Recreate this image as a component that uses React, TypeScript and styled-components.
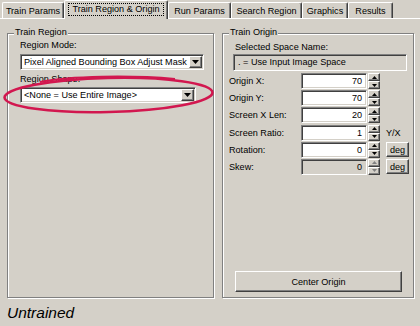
import React from 'react'
import styled, { createGlobalStyle } from 'styled-components'

const GlobalStyle = createGlobalStyle`
  html, body {
    margin: 0;
    padding: 0;
    background: #d4d0c8;
  }
  body {
    font-family: "Liberation Sans", Arial, sans-serif;
  }
`

const Window = styled.div`
  position: relative;
  width: 420px;
  height: 326px;
  overflow: hidden;
  background: #d4d0c8;
  color: #000;
  font-family: "Liberation Sans", Arial, sans-serif;
  font-size: 9.1px;
`

const TabStrip = styled.div`
  display: flex;
  align-items: flex-end;
  height: 18px;
  padding-left: 2px;
`

const Tab = styled.div<{ $w: number; $active?: boolean }>`
  box-sizing: border-box;
  position: relative;
  z-index: ${p => (p.$active ? 2 : 1)};
  width: ${p => p.$w}px;
  height: ${p => (p.$active ? 19 : 16)}px;
  margin-bottom: ${p => (p.$active ? -1 : 0)}px;
  padding-bottom: ${p => (p.$active ? 2 : 0)}px;
  display: flex;
  align-items: center;
  justify-content: center;
  white-space: nowrap;
  background: #d4d0c8;
  border-top: 1px solid #fff;
  border-left: 1px solid #fff;
  border-right: 1px solid #404040;
  border-radius: 2px 2px 0 0;
  box-shadow: inset -1px 0 0 #808080;
`

const FocusText = styled.span`
  padding: 1px 4px 2px;
  outline: 1px dotted #000;
  outline-offset: -1px;
`

const Page = styled.div`
  display: flex;
  gap: 8px;
  padding: 14px 0 0 7px;
  border-top: 1px solid #fff;
`

const Group = styled.div<{ $w: number }>`
  box-sizing: border-box;
  width: ${p => p.$w}px;
  height: 265px;
  display: flex;
  flex-direction: column;
  border: 1px solid #808080;
  box-shadow: inset 1px 1px 0 #fff, 1px 1px 0 #fff;
`

const Caption = styled.span`
  align-self: flex-start;
  margin: -7px 0 0 6px;
  padding: 0 1px;
  line-height: 11px;
  background: #d4d0c8;
  white-space: nowrap;
`

const GroupBody = styled.div<{ $pl: number }>`
  flex: 1;
  display: flex;
  flex-direction: column;
  padding: 0 0 5px ${p => p.$pl}px;
`

const Label = styled.div<{ $mt?: number; $mb?: number; $ml?: number }>`
  line-height: 12px;
  margin: ${p => p.$mt ?? 0}px 0 ${p => p.$mb ?? 0}px ${p => p.$ml ?? 0}px;
  white-space: nowrap;
`

const Sunken = styled.div<{ $bg?: string }>`
  box-sizing: border-box;
  background: ${p => p.$bg ?? '#fff'};
  border: 1px solid;
  border-color: #808080 #fff #fff #808080;
  box-shadow: inset 1px 1px 0 #404040, inset -1px -1px 0 #d4d0c8;
`

const Combo = styled(Sunken)<{ $w: number; $mt?: number }>`
  width: ${p => p.$w}px;
  height: 16px;
  margin-top: ${p => p.$mt ?? 0}px;
  display: flex;
  align-items: center;
  padding: 1px 1px 1px 3px;
`

const ComboText = styled.span`
  flex: 1;
  overflow: hidden;
  white-space: nowrap;
`

const Raised = styled.div`
  box-sizing: border-box;
  display: flex;
  align-items: center;
  justify-content: center;
  background: #d4d0c8;
  border: 1px solid;
  border-color: #fff #404040 #404040 #fff;
  box-shadow: inset -1px -1px 0 #808080;
`

const ComboButton = styled(Raised)`
  width: 13px;
  height: 12px;
`

const ReadField = styled(Sunken)`
  width: 174px;
  height: 17px;
  margin: 1px 0 0 4px;
  padding-left: 4px;
  line-height: 15px;
  white-space: nowrap;
`

const Rows = styled.div`
  display: flex;
  flex-direction: column;
  gap: 1.2px;
  margin-top: 2px;
`

const Row = styled.div`
  display: grid;
  grid-template-columns: 72px 66px 13px auto;
  align-items: center;
  height: 16px;
`

const NumBox = styled(Sunken)`
  height: 16px;
  padding-right: 4px;
  text-align: right;
  line-height: 14px;
`

const Spinner = styled.div`
  display: flex;
  flex-direction: column;
  width: 12px;
  height: 16px;
  margin-left: 1px;
`

const SpinButton = styled(Raised)`
  height: 8px;
`

const Extra = styled.div`
  margin-left: 6px;
  white-space: nowrap;
`

const SmallButton = styled(Raised)`
  width: 23px;
  height: 15px;
`

const CenterButton = styled(Raised)`
  width: 167px;
  height: 21px;
  margin: auto 0 0 6px;
`

const Status = styled.div`
  margin-top: 6px;
  padding-left: 7px;
  font-size: 15.5px;
  font-style: italic;
  line-height: 18px;
`

const Annotation = styled.svg`
  position: absolute;
  left: 0;
  top: 0;
  pointer-events: none;
`

const Arrow = ({ up, grey, w = 5 }: { up?: boolean; grey?: boolean; w?: number }) => {
  const h = Math.ceil(w / 2)
  return (
    <svg width={w} height={h} viewBox={`0 0 ${w} ${h}`}>
      <path
        d={up ? `M0 ${h}H${w}L${w / 2} 0Z` : `M0 0H${w}L${w / 2} ${h}Z`}
        fill={grey ? '#808080' : '#000'}
      />
    </svg>
  )
}

const SpinBox = ({ label, value, extra, disabled }: {
  label: string
  value: string
  extra?: React.ReactNode
  disabled?: boolean
}) => (
  <Row>
    <span>{label}</span>
    <NumBox $bg={disabled ? '#d4d0c8' : '#fff'}>{value}</NumBox>
    <Spinner>
      <SpinButton><Arrow up grey={disabled} /></SpinButton>
      <SpinButton><Arrow grey={disabled} /></SpinButton>
    </Spinner>
    {extra ? <Extra>{extra}</Extra> : <span />}
  </Row>
)

const tabs = [
  { name: 'Train Params', w: 62 },
  { name: 'Train Region & Origin', w: 104, active: true },
  { name: 'Run Params', w: 63 },
  { name: 'Search Region', w: 71 },
  { name: 'Graphics', w: 46 },
  { name: 'Results', w: 45 },
]

const App = () => {
  return (
    <Window>
      <GlobalStyle />
      <TabStrip>
        {tabs.map(t => (
          <Tab key={t.name} $w={t.w} $active={t.active}>
            {t.active ? <FocusText>{t.name}</FocusText> : t.name}
          </Tab>
        ))}
      </TabStrip>
      <Page>
        <Group $w={207}>
          <Caption>Train Region</Caption>
          <GroupBody $pl={12}>
            <Label $mt={1} $mb={3}>Region Mode:</Label>
            <Combo $w={184}>
              <ComboText>Pixel Aligned Bounding Box Adjust Mask</ComboText>
              <ComboButton><Arrow w={7} /></ComboButton>
            </Combo>
            <Label $mt={3} $mb={2}>Region Shape:</Label>
            <Combo $w={176}>
              <ComboText>&lt;None = Use Entire Image&gt;</ComboText>
              <ComboButton><Arrow w={7} /></ComboButton>
            </Combo>
          </GroupBody>
        </Group>
        <Group $w={192}>
          <Caption>Train Origin</Caption>
          <GroupBody $pl={6}>
            <Label $mt={3} $ml={6}>Selected Space Name:</Label>
            <ReadField $bg="#d4d0c8">. = Use Input Image Space</ReadField>
            <Rows>
              <SpinBox label="Origin X:" value="70" />
              <SpinBox label="Origin Y:" value="70" />
              <SpinBox label="Screen X Len:" value="20" />
              <SpinBox label="Screen Ratio:" value="1" extra="Y/X" />
              <SpinBox label="Rotation:" value="0" extra={<SmallButton>deg</SmallButton>} />
              <SpinBox label="Skew:" value="0" disabled extra={<SmallButton>deg</SmallButton>} />
            </Rows>
            <CenterButton>Center Origin</CenterButton>
          </GroupBody>
        </Group>
      </Page>
      <Status>Untrained</Status>
      <Annotation width={420} height={326}>
        <ellipse
          cx={108.5}
          cy={95}
          rx={104}
          ry={17}
          transform="rotate(-1.4 108.5 95)"
          fill="none"
          stroke="#d2174f"
          strokeWidth={2.6}
        />
        <path
          d="M40 82 C70 76 130 75 175 79"
          fill="none"
          stroke="#d2174f"
          strokeWidth={2}
        />
      </Annotation>
    </Window>
  )
}

export default App
